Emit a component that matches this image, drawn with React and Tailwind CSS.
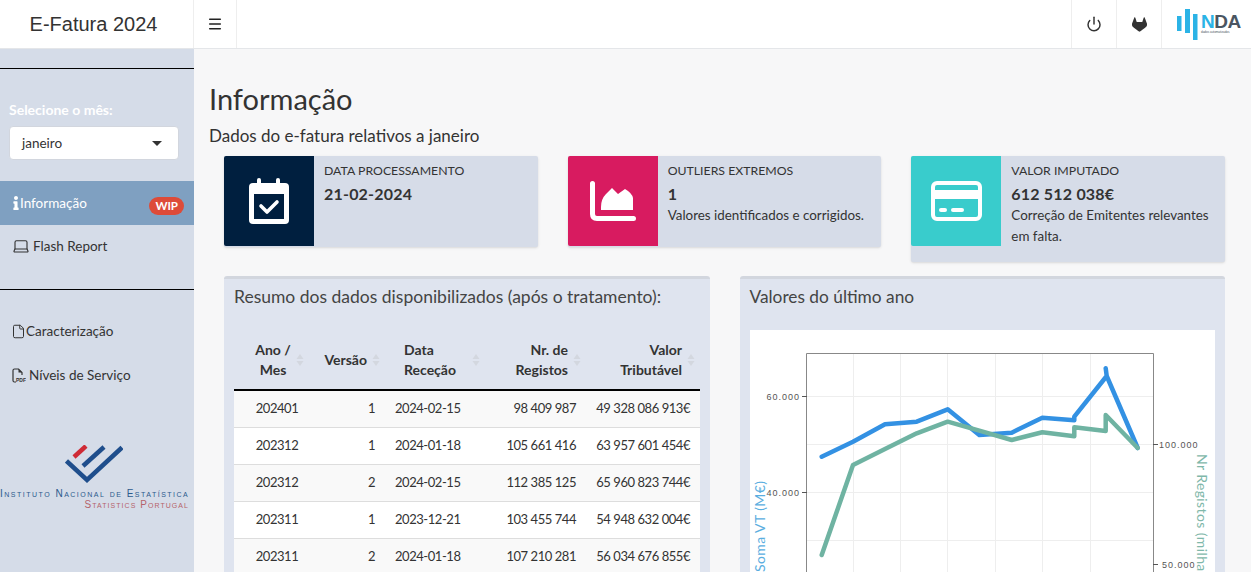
import React from 'react';
import { Power, Laptop, File, Menu } from 'lucide-react';
import { FaInfo } from 'react-icons/fa';
import { SiGitlab } from 'react-icons/si';

const rows = [
  ['202401', '1', '2024-02-15', '98 409 987', '49 328 086 913€', 'bg-[#f9f9f9]'],
  ['202312', '1', '2024-01-18', '105 661 416', '63 957 601 454€', 'bg-white'],
  ['202312', '2', '2024-02-15', '112 385 125', '65 960 823 744€', 'bg-[#f9f9f9]'],
  ['202311', '1', '2023-12-21', '103 455 744', '54 948 632 004€', 'bg-white'],
  ['202311', '2', '2024-01-18', '107 210 281', '56 034 676 855€', 'bg-[#f9f9f9]'],
];

const blue = '71.7,126.7 103,111.7 135,94.3 166.7,91.7 197.7,79.3 229.3,105 261.7,102.7 292.3,87.7 324.3,90.3 324.3,86.7 356.7,46 355.7,38.3 356.7,46 387.7,118';
const green = '71.7,225 103,135 135,119 166.7,103.3 197.7,91.7 229.3,100.7 261.7,110 292.3,102.3 324.3,106.3 324.3,97.3 355.7,101 355.7,85 387.7,118';

function SortArrows({ className = 'right-[5px]' }) {
  return (
    <svg className={`absolute top-1/2 -translate-y-1/2 ${className}`} width="8" height="14" viewBox="0 0 8 14">
      <path d="M4 1 L7.5 6 H0.5 Z M4 13 L7.5 8 H0.5 Z" fill="#d3d7df" />
    </svg>
  );
}

function CalendarIcon() {
  return (
    <svg width="40" height="46" viewBox="0 0 40 46">
      <rect x="8" y="0" width="4" height="10" rx="2" fill="#fff" />
      <rect x="27" y="0" width="4" height="10" rx="2" fill="#fff" />
      <rect x="0" y="5" width="40" height="41" rx="4" fill="#fff" />
      <rect x="5" y="16" width="30" height="25" fill="#001f3f" />
      <path d="M12 28 L18 34 L28 24" stroke="#fff" strokeWidth="3.6" fill="none" strokeLinecap="round" strokeLinejoin="round" />
    </svg>
  );
}

function AreaIcon() {
  return (
    <svg width="46" height="40" viewBox="0 0 46 40">
      <path d="M2.5 2.5 V33 Q2.5 37.5 7 37.5 H43.5" stroke="#fff" strokeWidth="5" fill="none" strokeLinecap="round" />
      <path d="M11 26 Q11 18 16 13 L22 7 L28 13 L35 8 Q42 12 43 17 V29 H11 Z" fill="#fff" />
    </svg>
  );
}

function CardIcon() {
  return (
    <svg width="51" height="40" viewBox="0 0 51 40">
      <rect x="2" y="2" width="47" height="36" rx="4" stroke="#fff" strokeWidth="4" fill="none" />
      <rect x="2" y="9" width="47" height="9" fill="#fff" />
      <rect x="8" y="27" width="8" height="4" rx="2" fill="#fff" />
      <rect x="20" y="27" width="13" height="4" rx="2" fill="#fff" />
    </svg>
  );
}

function PdfIcon() {
  return (
    <svg width="14" height="15" viewBox="0 0 14 15">
      <path d="M4 14 H2.500 Q1 14 1 12.500 V2.500 Q1 1 2.500 1 H6.500 L10 4.500 V7" stroke="#333" strokeWidth="1.2" fill="none" />
      <path d="M6.500 1 V4.500 H10 Z" fill="#333" />
      <text x="4" y="14" fontSize="5" fontWeight="700" fill="#333" fontFamily="'Liberation Sans', sans-serif">PDF</text>
    </svg>
  );
}

function NdaLogo() {
  return (
    <div className="flex items-center gap-[2px]">
      <svg width="22" height="31" viewBox="0 0 22 31">
        <rect x="0" y="7" width="4.500" height="15" fill="#2bb3e6" />
        <rect x="8" y="0" width="5" height="24" fill="#2bb3e6" />
        <rect x="16" y="5" width="4.500" height="26" fill="#2bb3e6" />
      </svg>
      <div className="flex flex-col -mt-[1px]">
        <div className="text-[19px] leading-[17px] font-bold tracking-[-0.5px] font-['Liberation_Sans',sans-serif]">
          <span className="text-[#2bb3e6]">N</span>
          <span className="text-[#4a5561]">DA</span>
        </div>
        <div className="text-[3px] leading-[4px] text-[#4a5561] font-['Liberation_Sans',sans-serif]">dados automatizados</div>
      </div>
    </div>
  );
}

function IneLogo() {
  return (
    <div className="flex flex-col items-center font-['Liberation_Sans',sans-serif]">
      <svg width="58" height="40" viewBox="0 0 58 40" className="-ml-[6px]">
        <path d="M1.500 16 L22 35 L57 2.500" stroke="#1f4e8c" strokeWidth="4.500" fill="none" />
        <path d="M18 21 L39 2" stroke="#1f4e8c" strokeWidth="4.500" />
        <path d="M9 12 L21 1" stroke="#cf2b36" strokeWidth="4.500" />
      </svg>
      <div className="w-[194px] mt-[3px] text-[10px] leading-[11px] tracking-[1.5px] [font-variant:small-caps] text-[#2c5a8c] whitespace-nowrap">Instituto Nacional de Estatística</div>
      <div className="w-[194px] text-right pr-[5px] text-[10px] leading-[11px] tracking-[1.05px] [font-variant:small-caps] text-[#b5636b] whitespace-nowrap">Statistics Portugal</div>
    </div>
  );
}

function InfoBox({ color, icon, title, value, text, extra }) {
  return (
    <div className={`flex rounded-[2px] bg-[#d6dce8] shadow-sm items-start ${extra}`}>
      <div className={`w-[90px] h-[90px] shrink-0 flex items-center justify-center rounded-l-[2px] ${color}`}>{icon}</div>
      <div className="pl-[10px] pr-[10px] pt-[5px] pb-[10px] text-[#333]">
        <div className="text-[12.300px] leading-[20px] uppercase">{title}</div>
        <div className="mt-[1px] text-[16px] leading-[23px] font-bold tracking-[0.2px]">{value}</div>
        {text && <div className="text-[13.400px] leading-[21px]">{text}</div>}
      </div>
    </div>
  );
}

function Chart() {
  return (
    <svg width="465" height="300" viewBox="0 0 465 300" className="block">
      <g stroke="#eeeeee" strokeWidth="1">
        <path d="M103.500 23 V300 M150.500 23 V300 M197.500 23 V300 M245.500 23 V300 M292.500 23 V300 M340.500 23 V300" />
        <path d="M57 66.500 H403 M57 114.500 H403 M57 162.500 H403 M57 210.500 H403 M57 258.500 H403" />
      </g>
      <path d="M56.500 300 V23.500 H403.500 V300" stroke="#888888" fill="none" />
      <path d="M52 66.500 H57 M52 162.500 H57 M403 114.500 H408 M403 234.500 H408" stroke="#555" />
      <g fontSize="9" fill="#555" letterSpacing="1" fontFamily="'Liberation Sans', sans-serif">
        <text x="50" y="70" textAnchor="end">60.000</text>
        <text x="50" y="166" textAnchor="end">40.000</text>
        <text x="409" y="118">100.000</text>
        <text x="412" y="238">50.000</text>
      </g>
      <polyline points={blue} fill="none" stroke="#3391e3" strokeWidth="4.500" strokeLinejoin="round" strokeLinecap="round" />
      <polyline points={green} fill="none" stroke="#6fb3a2" strokeWidth="4.500" strokeLinejoin="round" strokeLinecap="round" />
      <text transform="translate(15 242) rotate(-90)" fontSize="14" fill="#5aaee0" letterSpacing="0.4" fontFamily="'Lato', sans-serif">Soma VT (M€)</text>
      <text transform="translate(447 124) rotate(90)" fontSize="14" fill="#7fb8aa" letterSpacing="0.4" fontFamily="'Lato', sans-serif">Nr Registos (milhares)</text>
    </svg>
  );
}

export default function App() {
  return (
    <div className="h-screen overflow-hidden flex flex-col bg-[#f7f7f8] text-[#333] font-['Lato','Noto_Sans',sans-serif] text-[14px]">
      <header className="h-[49px] shrink-0 flex bg-white border-b border-[#e4e6e9]">
        <div className="w-[194px] shrink-0 border-r border-[#eeeeee] flex items-center justify-center pr-[6px] text-[20px] text-[#333] font-['Liberation_Sans',sans-serif]">
          E-Fatura 2024
        </div>
        <div className="w-[43px] shrink-0 border-r border-[#eeeeee] flex items-center justify-center">
          <Menu size={16} strokeWidth={2.2} color="#222" />
        </div>
        <div className="flex-1" />
        <div className="w-[45px] border-l border-[#eeeeee] flex items-center justify-center">
          <Power size={16} strokeWidth={2.2} color="#333" />
        </div>
        <div className="w-[45px] border-l border-[#eeeeee] flex items-center justify-center">
          <SiGitlab size={15} color="#333" />
        </div>
        <div className="w-[90px] border-l border-[#eeeeee] flex items-center pl-[15px]">
          <NdaLogo />
        </div>
      </header>

      <div className="flex flex-1 min-h-0">
        <aside className="w-[194px] shrink-0 bg-[#d5dce8] pt-[19px]">
          <div className="border-t border-black" />
          <div className="pt-[31px] px-[9px]">
            <div className="text-[14px] leading-[20px] font-bold text-white">Selecione o mês:</div>
            <div className="mt-[6px] mr-[6px] h-[34px] bg-white rounded-[4px] border border-[#d2d6de] flex items-center justify-between pl-[12px] pr-[16px]">
              <span className="text-[13.500px] text-[#333]">janeiro</span>
              <span className="w-0 h-0 border-l-[5px] border-r-[5px] border-t-[5px] border-l-transparent border-r-transparent border-t-[#333]" />
            </div>
          </div>
          <nav className="mt-[21px] text-[13.500px]">
            <div className="h-[44px] bg-[#7fa0c1] flex items-center pl-[12px] pr-[10px] text-white">
              <FaInfo className="w-[8px] h-[14px]" />
              <span>Informação</span>
              <span className="ml-auto mt-[6px] px-[6px] h-[18px] rounded-full bg-[#dd4b39] text-[11.500px] leading-[18px] font-bold">WIP</span>
            </div>
            <div className="h-[42px] flex items-center pl-[12px] text-[#333]">
              <Laptop size={18} strokeWidth={1.5} className="mr-[3px]" />
              <span>Flash Report</span>
            </div>
          </nav>
          <div className="mt-[22px] border-t border-black" />
          <div className="mt-[19px] text-[13.500px]">
            <div className="h-[44px] flex items-center pl-[11px]">
              <File size={15} strokeWidth={1.6} />
              <span>Caracterização</span>
            </div>
            <div className="h-[44px] flex items-center pl-[12px]">
              <PdfIcon />
              <span className="ml-[3px]">Níveis de Serviço</span>
            </div>
          </div>
          <div className="mt-[48px]">
            <IneLogo />
          </div>
        </aside>

        <main className="flex-1 min-w-0 pl-[15px] pr-[11px] pt-[30px]">
          <h1 className="text-[29px] leading-[40px] text-[#333]">Informação</h1>
          <div className="mt-[4px] text-[17px] leading-[26px] text-[#333]">Dados do e-fatura relativos a janeiro</div>

          <div className="grid grid-cols-3 items-start mt-[7px]">
            <div className="px-[15px]">
              <InfoBox color="bg-[#001f3f]" icon={<CalendarIcon />} title="Data Processamento" value="21-02-2024" extra="h-[91px]" />
            </div>
            <div className="px-[15px]">
              <InfoBox color="bg-[#d81b60]" icon={<AreaIcon />} title="Outliers Extremos" value="1" text="Valores identificados e corrigidos." extra="h-[91px]" />
            </div>
            <div className="px-[15px]">
              <InfoBox color="bg-[#39cccc]" icon={<CardIcon />} title="Valor Imputado" value="612 512 038€" text="Correção de Emitentes relevantes em falta." extra="h-[106px]" />
            </div>
          </div>

          <div className="grid grid-cols-2 mt-[14px]">
            <div className="px-[15px]">
              <section className="bg-[#dfe4ef] border-t-[3px] border-[#d2d6de] rounded-[3px]">
                <h3 className="px-[10px] pt-[8px] text-[17.500px] leading-[20px] text-[#444]">Resumo dos dados disponibilizados (após o tratamento):</h3>
                <div className="px-[10px] pt-[23px]">
                  <table className="w-[466px] table-fixed border-collapse text-[14px]">
                    <colgroup>
                      <col className="w-[86px]" />
                      <col className="w-[65px]" />
                      <col className="w-[100px]" />
                      <col className="w-[101px]" />
                      <col className="w-[114px]" />
                    </colgroup>
                    <thead>
                      <tr className="h-[60px] border-b-2 border-black font-bold text-[#333]">
                        <th className="relative text-center font-bold leading-[20px] pl-[10px] pr-[18px]">Ano / Mes<SortArrows className="right-[16px]" /></th>
                        <th className="relative text-right font-bold leading-[20px] pr-[18px]">Versão<SortArrows /></th>
                        <th className="relative text-left font-bold leading-[20px] pl-[19px] pr-[18px]">Data Receção<SortArrows /></th>
                        <th className="relative text-right font-bold leading-[20px] pl-[24px] pr-[18px]">Nr. de Registos<SortArrows /></th>
                        <th className="relative text-right font-bold leading-[20px] pl-[30px] pr-[18px]">Valor Tributável<SortArrows /></th>
                      </tr>
                    </thead>
                    <tbody className="text-[13px] tracking-[-0.45px]">
                      {rows.map((r, i) => (
                        <tr key={i} className={`h-[37px] border-b border-[#dddddd] ${r[5]}`}>
                          <td className="text-center">{r[0]}</td>
                          <td className="text-right pr-[10px]">{r[1]}</td>
                          <td className="text-left pl-[10px]">{r[2]}</td>
                          <td className="text-right pr-[10px]">{r[3]}</td>
                          <td className="text-right pr-[10px] whitespace-nowrap">{r[4]}</td>
                        </tr>
                      ))}
                    </tbody>
                  </table>
                </div>
              </section>
            </div>
            <div className="px-[15px]">
              <section className="bg-[#dfe4ef] border-t-[3px] border-[#d2d6de] rounded-[3px]">
                <h3 className="px-[10px] pt-[8px] text-[17.300px] leading-[20px] text-[#444]">Valores do último ano</h3>
                <div className="px-[10px] pt-[23px]">
                  <div className="bg-white">
                    <Chart />
                  </div>
                </div>
              </section>
            </div>
          </div>
        </main>
      </div>
    </div>
  );
}
